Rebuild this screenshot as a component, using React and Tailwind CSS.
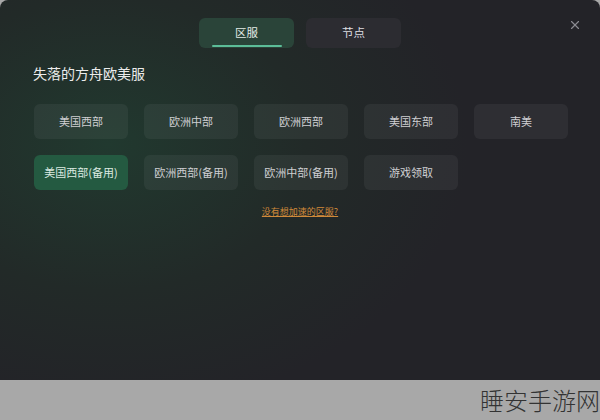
import { X } from 'lucide-react';

const regions = [
  { name: '美国西部' },
  { name: '欧洲中部' },
  { name: '欧洲西部' },
  { name: '美国东部' },
  { name: '南美' },
  { name: '美国西部(备用)', active: true },
  { name: '欧洲西部(备用)' },
  { name: '欧洲中部(备用)' },
  { name: '游戏领取' },
];

const RegionButton = ({ name, active }) => (
  <button
    className={
      'h-[35px] rounded-md text-[11px] ' +
      (active ? 'bg-[#245a41] text-[#dcebe2]' : 'bg-white/[0.05] text-[#cfcfd2]')
    }
  >
    {name}
  </button>
);

export default function App() {
  return (
    <div
      className="w-[600px] h-[420px] flex flex-col bg-[#a8a8a8] overflow-hidden"
      style={{ fontFamily: '"Noto Sans CJK SC", "Noto Sans", sans-serif' }}
    >
      <div className="relative h-[380px] rounded-t-lg bg-[#232328] bg-[radial-gradient(ellipse_60%_70%_at_18%_38%,#21392f_0%,#222a28_55%,#232328_100%)]">
        <button className="absolute right-[18px] top-[18px] text-[#8a8a90]">
          <X size={14} strokeWidth={2} />
        </button>

        <div className="flex justify-center gap-3 pt-[18px]">
          <div className="relative w-[95px] h-[30px] rounded-md bg-[#2a4439] flex items-center justify-center text-[11.5px] text-[#e4ece8]">
            区服
            <div className="absolute bottom-[1px] left-[13px] right-[12px] h-[2px] rounded-full bg-[#5cbd98]" />
          </div>
          <div className="w-[95px] h-[30px] rounded-md bg-[#2c2c31] flex items-center justify-center text-[11.5px] text-[#dedee2]">
            节点
          </div>
        </div>

        <h1 className="pl-[33px] mt-[14px] text-[14px] leading-[22px] text-[#ececec]">
          失落的方舟欧美服
        </h1>

        <div className="grid grid-cols-5 gap-x-[16px] gap-y-[16px] px-[34px] pr-[32px] mt-[20px]">
          {regions.map((r) => (
            <RegionButton key={r.name} {...r} />
          ))}
        </div>

        <div className="flex justify-center mt-[16px]">
          <a className="text-[9px] leading-[12px] text-[#d08a3a] underline">没有想加速的区服?</a>
        </div>
      </div>

      <div className="flex-1 flex items-center justify-end">
        <span className="text-[24px] leading-none text-[#333333] font-light">
          睡安手游网
        </span>
      </div>
    </div>
  );
}
